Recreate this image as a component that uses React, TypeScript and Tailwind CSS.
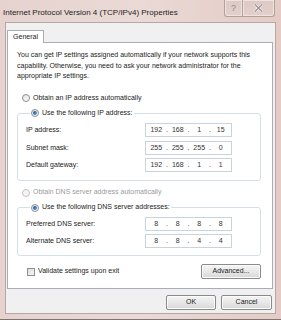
import React from 'react';

const ui = "font-['Liberation_Sans',Arial,sans-serif]";

function Radio({ checked, disabled }: { checked?: boolean; disabled?: boolean }) {
    return (
        <span
            className={`inline-flex w-[8px] h-[8px] rounded-full border items-center justify-center shrink-0 ${
                disabled ? 'border-[#c4c4c4] bg-[#f4f4f4]' : 'border-[#8e8f8f] bg-gradient-to-br from-[#e2e2e2] to-[#fbfbfb]'
            }`}
        >
            {checked && <span className="w-[4px] h-[4px] rounded-full bg-gradient-to-br from-[#1c4f8c] to-[#5ea6e0]" />}
        </span>
    );
}

function IpField({ parts }: { parts: string[] }) {
    return (
        <div className="w-[87px] h-[14px] border border-[#c9d3dc] bg-white flex items-center px-[1px] text-[#333]">
            {parts.map((p, i) => (
                <React.Fragment key={i}>
                    <span className="w-[19px] text-center">{p}</span>
                    {i < 3 && <span className="w-[3px] text-center">.</span>}
                </React.Fragment>
            ))}
        </div>
    );
}

function Row({ label, parts }: { label: string; parts: string[] }) {
    return (
        <div className="h-[17.5px] flex items-center">
            <span className="w-[119px]">{label}</span>
            <IpField parts={parts} />
        </div>
    );
}

function Btn({ children, w }: { children: React.ReactNode; w: string }) {
    return (
        <button
            className={`${w} h-[15px] rounded-[2px] border border-[#8a8a8a] bg-gradient-to-b from-[#f4f4f4] via-[#e8e8e8] to-[#d6d6d6] text-[#222] flex items-center justify-center shadow-[inset_0_0_0_1px_#fbfbfb]`}
        >
            {children}
        </button>
    );
}

export default function App() {
    return (
        <div className={`${ui} w-[281px] h-[320px] flex flex-col bg-gradient-to-r from-[#e6d3cf] via-[#ead9d5] to-[#e4cbc6] border-b border-[#7d7474] text-[7px] leading-[10.5px] text-[#222]`}>
            {/* title bar */}
            <div className="h-[22px] flex items-start justify-between pl-[3px]">
                <span className="pt-[8px] text-[8px] text-[#1e1e1e]">Internet Protocol Version 4 (TCP/IPv4) Properties</span>
                <div className="flex mr-[6px]">
                    <div className="w-[19px] h-[17px] border border-t-0 border-[#b29f9b] rounded-bl-[3px] bg-gradient-to-b from-[#ddc8c4] to-[#e3d0cc] flex items-center justify-center text-[9px] text-[#948785] shadow-[inset_0_0_0_1px_#efe2df]">
                        ?
                    </div>
                    <div className="w-[32px] h-[17px] border border-t-0 border-l-0 border-[#b29f9b] rounded-br-[3px] bg-gradient-to-b from-[#ddc8c4] to-[#e3d0cc] flex items-center justify-center shadow-[inset_0_0_0_1px_#efe2df]">
                        <svg width="9" height="8" viewBox="0 0 9 8">
                            <path d="M1 0.5 L8 7.5 M8 0.5 L1 7.5" stroke="#f6f0ef" strokeWidth="2.6" />
                            <path d="M1 0.5 L8 7.5 M8 0.5 L1 7.5" stroke="#9d9291" strokeWidth="1.2" />
                        </svg>
                    </div>
                </div>
            </div>

            {/* client area */}
            <div className="flex-1 mx-[5px] mb-[5px] bg-[#f0f0f0] border border-[#b8a8a5] flex flex-col pt-[7px]">
                <div className="ml-[1px] w-[37px] h-[13px] -mb-px relative bg-white border border-b-0 border-[#a9aeb6] flex items-center justify-center">
                    General
                </div>
                <div className="mx-[1px] mr-[2px] h-[247px] bg-white border border-[#a9aeb6] px-[9px] pt-[7px]">
                    <p className="pr-[4px]">
                        You can get IP settings assigned automatically if your network supports this capability. Otherwise, you need to ask your network administrator for the appropriate IP settings.
                    </p>

                    <div className="mr-[2px]">
                        <label className="mt-[11px] ml-[5px] flex items-center gap-[3px] h-[11px]">
                            <Radio />
                            Obtain an IP address automatically
                        </label>
                        <fieldset className="mt-[4px] border border-[#d5dfe5] rounded-[3px] px-[8px] pt-[3px] pb-[6px]">
                            <legend className="ml-[4px] px-[1px] flex items-center gap-[3px] h-[11px]">
                                <Radio checked />
                                Use the following IP address:
                            </legend>
                            <Row label="IP address:" parts={['192', '168', '1', '15']} />
                            <Row label="Subnet mask:" parts={['255', '255', '255', '0']} />
                            <Row label="Default gateway:" parts={['192', '168', '1', '1']} />
                        </fieldset>

                        <label className="mt-[6px] ml-[5px] flex items-center gap-[3px] h-[11px] text-[#9a9a9a]">
                            <Radio disabled />
                            Obtain DNS server address automatically
                        </label>
                        <fieldset className="mt-[4px] border border-[#d5dfe5] rounded-[3px] px-[8px] pt-[2px] pb-[5px]">
                            <legend className="ml-[4px] px-[1px] flex items-center gap-[3px] h-[11px]">
                                <Radio checked />
                                Use the following DNS server addresses:
                            </legend>
                            <Row label="Preferred DNS server:" parts={['8', '8', '8', '8']} />
                            <Row label="Alternate DNS server:" parts={['8', '8', '4', '4']} />
                        </fieldset>

                        <div className="mt-[8px] flex items-center justify-between">
                            <label className="ml-[10px] flex items-center gap-[3px]">
                                <span className="w-[8px] h-[8px] border border-[#8e8f8f] bg-gradient-to-br from-[#dcdcdc] to-[#f8f8f8]" />
                                Validate settings upon exit
                            </label>
                            <Btn w="w-[60px]">Advanced...</Btn>
                        </div>
                    </div>
                </div>

                <div className="flex justify-end gap-[5px] mt-[6px] mr-[3px]">
                    <Btn w="w-[50px]">OK</Btn>
                    <Btn w="w-[51px]">Cancel</Btn>
                </div>
            </div>
        </div>
    );
}
